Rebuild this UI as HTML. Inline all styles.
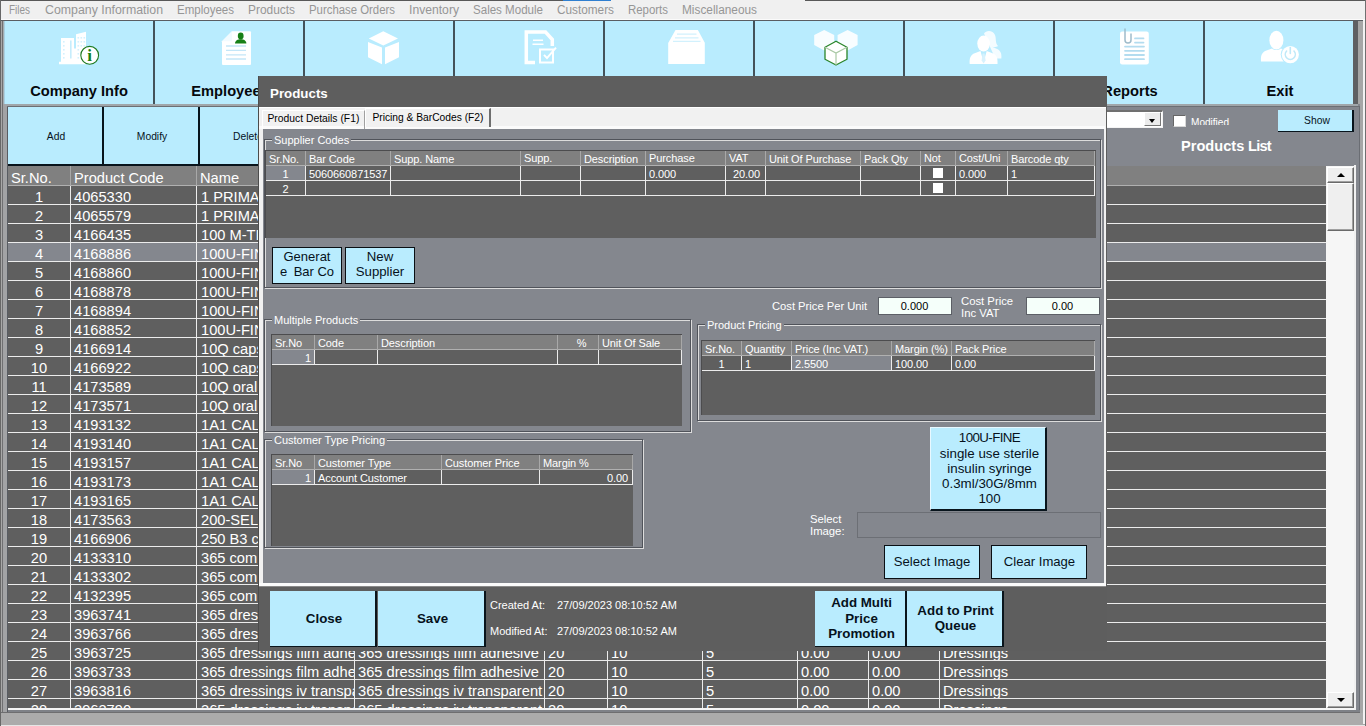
<!DOCTYPE html>
<html><head><meta charset="utf-8"><title>Products</title>
<style>
html,body{margin:0;padding:0;}
body{width:1366px;height:726px;overflow:hidden;background:#a0a0a0;font-family:"Liberation Sans",sans-serif;position:relative;}
.a{position:absolute;box-sizing:border-box;}
.t{position:absolute;white-space:nowrap;line-height:1;}
.menu{font-size:12px;color:#969696;top:4px;transform-origin:0 0;}
.tb{position:absolute;top:21px;height:83px;width:148px;background:#b9ecfe;}
.tbl{position:absolute;left:2px;right:0;top:62px;text-align:center;font-weight:bold;font-size:14.67px;color:#05080c;line-height:16px;white-space:nowrap;}
.sep{position:absolute;top:21px;height:83px;width:2px;background:#44525a;}
.btn{position:absolute;box-sizing:border-box;background:#b9ecfe;color:#06121c;display:flex;align-items:center;justify-content:center;text-align:center;}
.b3{border-right:2px solid #08141c;border-bottom:2px solid #08141c;}
.b1{border:1px solid #0a0f14;}
.b4{border-right:2px solid #0a151c;border-bottom:1.5px solid #0a151c;}
.g{position:absolute;background:#5f5f5f;overflow:hidden;}
.c{position:absolute;box-sizing:border-box;color:#fff;white-space:nowrap;overflow:hidden;border-right:1px solid #ececec;border-bottom:1px solid #ececec;}
.h{background:#808080;border-right:1px solid #a8a8a8;border-bottom:1px solid #b0b0b0;}
.big .c{font-size:14.67px;line-height:18px;height:19px;padding-left:3px;padding-top:1.5px;}
.sm .c{font-size:11px;line-height:16px;height:15px;padding-left:3px;letter-spacing:-0.1px;}
.gb{position:absolute;box-sizing:border-box;border:1px solid #50535a;box-shadow:inset 1px 1px 0 #dcdcdc, 1px 1px 0 #dcdcdc;}
.lg{position:absolute;background:#84878e;color:#fff;font-size:11px;line-height:13px;padding:0 2px;white-space:nowrap;}
.w{color:#fff;}
</style></head><body>

<div class="a" style="left:0;top:0;width:1366px;height:1px;background:#585858"></div>
<div class="a" style="left:563px;top:0;width:48px;height:1px;background:#2f7fd0"></div>
<div class="a" style="left:611px;top:0;width:194px;height:1px;background:#f0f0f0"></div>
<div class="a" style="left:1px;top:1px;width:1364px;height:19px;background:#f0f0f0;border-bottom:1px solid #fbfbfb"></div>
<div class="a" style="left:1px;top:20px;width:1364px;height:1px;background:#5a5d62"></div>
<div class="a" style="left:0;top:0;width:1px;height:726px;background:#686868"></div>
<div class="a" style="left:1px;top:21px;width:1px;height:693px;background:#a8a8a8"></div>
<div class="a" style="left:2px;top:21px;width:1px;height:693px;background:#707072"></div>
<div class="a" style="left:3px;top:21px;width:1px;height:85px;background:#a4acb0"></div>
<div class="a" style="left:4px;top:21px;width:1px;height:85px;background:#a8cfe0"></div>
<div class="a" style="left:3px;top:104px;width:4px;height:610px;background:#a2a3a5"></div>
<div class="a" style="left:7px;top:106px;width:1px;height:606px;background:#585c62"></div>
<div class="a" style="left:1358px;top:21px;width:8px;height:705px;background:#a6a6a6"></div>
<div class="a" style="left:1362.5px;top:20px;width:2.5px;height:704px;background:#f2f2f2"></div>
<div class="a" style="left:1365px;top:0;width:1px;height:726px;background:#707070"></div>
<span class="t menu" style="left:9px;transform:scaleX(0.8287)">Files</span>
<span class="t menu" style="left:45px;transform:scaleX(1.0285)">Company Information</span>
<span class="t menu" style="left:177px;transform:scaleX(0.9600)">Employees</span>
<span class="t menu" style="left:248px;transform:scaleX(0.9924)">Products</span>
<span class="t menu" style="left:309px;transform:scaleX(0.9482)">Purchase Orders</span>
<span class="t menu" style="left:409px;transform:scaleX(1.0130)">Inventory</span>
<span class="t menu" style="left:473px;transform:scaleX(0.9626)">Sales Module</span>
<span class="t menu" style="left:557px;transform:scaleX(0.9824)">Customers</span>
<span class="t menu" style="left:628px;transform:scaleX(0.9517)">Reports</span>
<span class="t menu" style="left:682px;transform:scaleX(0.9862)">Miscellaneous</span>
<div class="a" style="left:8px;top:104px;width:1352px;height:608px;background:#84878e"></div>
<div class="a" style="left:5px;top:104px;width:1353px;height:2px;background:#a0a6aa"></div>
<div class="a" style="left:7px;top:106px;width:1353px;height:1px;background:#6c6f74"></div>
<div class="a" style="left:5px;top:21px;width:1348px;height:83px;background:#b9ecfe"></div>
<div class="a" style="left:1353px;top:21px;width:5px;height:83px;background:#5f6063"></div>
<div class="a" style="left:1359px;top:106px;width:1px;height:607px;background:#6a6d73"></div>
<div class="tb" style="left:5px"><div class="tbl" style="left:0">Company Info</div></div>
<div class="sep" style="left:153px"></div>
<div class="tb" style="left:155px"><div class="tbl">Employees</div></div>
<div class="sep" style="left:303px"></div>
<div class="tb" style="left:305px"><div class="tbl">Products</div></div>
<div class="sep" style="left:453px"></div>
<div class="tb" style="left:455px"><div class="tbl">Purchase Orders</div></div>
<div class="sep" style="left:603px"></div>
<div class="tb" style="left:605px"><div class="tbl">Inventory</div></div>
<div class="sep" style="left:753px"></div>
<div class="tb" style="left:755px"><div class="tbl">Sales</div></div>
<div class="sep" style="left:903px"></div>
<div class="tb" style="left:905px"><div class="tbl">Customers</div></div>
<div class="sep" style="left:1053px"></div>
<div class="tb" style="left:1055px"><div class="tbl">Reports</div></div>
<div class="sep" style="left:1203px"></div>
<div class="tb" style="left:1205px"><div class="tbl">Exit</div></div>
<svg class="a" style="left:0;top:21px" width="1366" height="83" viewBox="0 21 1366 83">
<g fill="#fff">
<!-- company -->
<path d="M61 38h13v10.500h2V34.300l10-2.500V62h-25z M59 61.800h27v2.400h-27z"/>
<g fill="#d4f1fd"><rect x="63" y="41" width="1.6" height="1.6"/><rect x="63" y="45" width="1.6" height="1.6"/><rect x="63" y="49" width="1.6" height="1.6"/><rect x="63" y="53" width="1.6" height="1.6"/><rect x="63" y="57" width="1.6" height="1.6"/>
<rect x="77.5" y="37" width="1.6" height="1.6"/><rect x="80.5" y="37" width="1.6" height="1.6"/><rect x="83.5" y="37" width="1.6" height="1.6"/>
<rect x="77.5" y="41" width="1.6" height="1.6"/><rect x="80.5" y="41" width="1.6" height="1.6"/><rect x="83.5" y="41" width="1.6" height="1.6"/>
<rect x="77.5" y="45" width="1.6" height="1.6"/><rect x="80.5" y="45" width="1.6" height="1.6"/><rect x="83.5" y="45" width="1.6" height="1.6"/>
<rect x="77.5" y="49" width="1.6" height="1.6"/><rect x="77.5" y="53" width="1.6" height="1.6"/><rect x="77.5" y="57" width="1.6" height="1.6"/>
<rect x="70" y="40.5" width="1.6" height="18" fill="#c6edfc"/></g>
<circle cx="89.7" cy="55.3" r="8.9" stroke="#1f7a1f" stroke-width="1.1"/>
<text x="89.6" y="61.4" text-anchor="middle" font-family="Liberation Serif,serif" font-weight="bold" font-size="17" fill="#168016">i</text>
<!-- employees -->
<path d="M232 31.2h18a1 1 0 0 1 1 1V64a1 1 0 0 1-1 1H223a1 1 0 0 1-1-1V41.2z"/>
<path d="M232 31.2v9a1 1 0 0 1-1 1h-9z" fill="#f2fbff"/>
<g stroke="#c3e6f8" stroke-width="1.3"><path d="M226 46h20M226 50.4h20M226 54.8h20M226 59h20"/></g>
<ellipse cx="240.7" cy="36" rx="2.9" ry="3.4" fill="#178017"/>
<path d="M235 43.6c0-3 2.6-4.4 5.700-4.400s5.700 1.400 5.700 4.400z" fill="#178017"/>
<!-- products cube -->
<path d="M383.300 31.200L398 38.400 383.300 45.600 368.800 38.400z M368 42l14 5.400v16.800l-14-7z M399 42l-14 5.400v16.800l14-7z"/>
<!-- purchase orders -->
<g fill="none" stroke="#fff">
<path d="M535 62.400H526.300V32H545.500L552.300 39.500V46" stroke-width="3.500"/>
<path d="M533 40.300h10M532.500 44.300h11" stroke-width="1.400"/>
<rect x="540" y="49.500" width="13" height="13" stroke-width="2"/>
<path d="M544 54.800l3 3.300 9-10.500" stroke-width="2"/>
</g>
<!-- inventory -->
<path d="M668.200 43h36.600v21h-36.600z M675.500 30h22.400l7 13h-36.700z"/>
<g stroke="#d2f1fd" stroke-width="1.300"><path d="M677 34.200h19.500M675 37.800h23.500M673 41.400h27.500"/></g>
<!-- sales cubes -->
<path d="M824.200 30l10 5v10l-10 5.500-10-5.500v-10z M847.600 30l10 5v10l-10 5.500-10-5.500v-10z" fill="#f8fdff"/>
<path d="M836 41.200l11 6v12l-11 5.800-11-5.800v-12z" stroke="#2a852a" stroke-width="1.300" stroke-linejoin="round"/>
<path d="M825 47.200l11 5.800 11-5.800M836 53v12" fill="none" stroke="#a9c8a4" stroke-width="1.200"/>
<!-- customers -->
<path d="M984 33.500c2-3.500 9-3.500 11 1.500 1.500 4 0 8 3 11-1.500 1.200-4 1.200-6 .8 3 1.500 8 2.500 9 6.500 .5 2 .5 4 .3 5.200h-6z" fill="#f4fcff"/>
<ellipse cx="983.600" cy="43.600" rx="6.300" ry="8"/>
<path d="M969.700 64c-.5-6 1-9.500 5-10.800l5.800-2.200 3.100 11.500 3.100-11.500 5.800 2.200c4 1.300 5.500 4.800 5 10.800z"/>
<path d="M982.600 53.500h2l1 7-2 3-2-3z" fill="#d8f2fd"/>
<!-- reports -->
<rect x="1120" y="31.500" width="28.800" height="33" rx="2.200"/>
<g stroke="#b3dcef" stroke-width="1.800" stroke-linecap="round"><path d="M1135 38.400h8.500M1135 42.600h8.500M1125 46.600h19M1125 50.800h19M1125 55h19M1125 59.200h19"/></g>
<path d="M1125 28.500v11.500a3 3 0 0 0 6 0V33.500" fill="none" stroke="#9fbccb" stroke-width="1.500"/>
<!-- exit -->
<ellipse cx="1276.400" cy="40.200" rx="7" ry="9.400"/>
<path d="M1261 61.500c-.5-6 1-9.500 5.500-11l5.500-2c2.500 2 6 2 8.800 0l5.200 2c3 1 4 4 4 11z"/>
<circle cx="1290.300" cy="54.600" r="9.600" fill="#b9ecfe"/>
<circle cx="1290.300" cy="54.600" r="8.600"/>
<path d="M1286.600 51a5 5 0 1 0 7.400 0" fill="none" stroke="#bfe9f8" stroke-width="1.600" stroke-linecap="round"/>
<path d="M1290.300 47.500v6" stroke="#bfe9f8" stroke-width="1.600" stroke-linecap="round"/>
</g></svg>

<div class="btn b3" style="left:8px;top:107px;width:96px;height:59px;font-size:10.3px;padding-top:2px;padding-left:2px">Add</div>
<div class="btn b3" style="left:104px;top:107px;width:96px;height:59px;font-size:10.3px;padding-top:2px;padding-left:2px">Modify</div>
<div class="btn b3" style="left:200px;top:107px;width:96px;height:59px;font-size:10.3px;padding-top:2px;padding-left:2px">Delete</div>
<div class="a" style="left:1040px;top:110px;width:123px;height:18px;background:#fff;border:1px solid #f4f4f4;border-top:2px solid #707070;border-left-color:#777"></div>
<div class="a" style="left:1144px;top:112px;width:17px;height:14px;background:#ececec;border:1px solid #fff;border-right-color:#777;border-bottom-color:#777"></div>
<div class="a" style="left:1148.5px;top:119px;width:0;height:0;border-left:3.5px solid transparent;border-right:3.5px solid transparent;border-top:4px solid #000"></div>
<div class="a" style="left:1173px;top:115px;width:13px;height:12px;background:#fff;border:1px solid #d8d8d8;border-top-color:#666;border-left-color:#666"></div>
<div class="a" style="left:1190px;top:116px;width:50px;height:9px;overflow:hidden"><span class="t w" style="left:1px;top:1.1px;font-size:10.6px;transform:scaleX(.95);transform-origin:0 0">Modified</span></div>
<div class="btn b3" style="left:1278px;top:110px;width:76px;height:21.5px;font-size:10.3px;padding-left:4px;border-bottom-width:1.5px">Show</div>
<span class="t w" style="left:1181px;top:138.8px;font-size:14.6px;font-weight:bold;word-spacing:-0.3px">Products <span style="letter-spacing:-0.8px">List</span></span>
<div class="g big" style="left:8px;top:166px;width:1318px;height:543px;">
<div class="c h" style="left:0px;top:0px;width:63px;height:20px;padding-top:3px;">Sr.No.</div>
<div class="c h" style="left:63px;top:0px;width:126px;height:20px;padding-top:3px;">Product Code</div>
<div class="c h" style="left:189px;top:0px;width:158px;height:20px;padding-top:3px;">Name</div>
<div class="c h" style="left:347px;top:0px;width:190px;height:20px;padding-top:3px;"></div>
<div class="c h" style="left:537px;top:0px;width:63px;height:20px;padding-top:3px;"></div>
<div class="c h" style="left:600px;top:0px;width:95px;height:20px;padding-top:3px;"></div>
<div class="c h" style="left:695px;top:0px;width:95px;height:20px;padding-top:3px;"></div>
<div class="c h" style="left:790px;top:0px;width:71px;height:20px;padding-top:3px;"></div>
<div class="c h" style="left:861px;top:0px;width:71px;height:20px;padding-top:3px;"></div>
<div class="c h" style="left:932px;top:0px;width:400px;height:20px;padding-top:3px;"></div>
<div class="c " style="left:0px;top:20px;width:63px;text-align:center;padding-left:0;">1</div>
<div class="c " style="left:63px;top:20px;width:126px;">4065330</div>
<div class="c " style="left:189px;top:20px;width:158px;padding-left:4px;">1 PRIMA</div>
<div class="c " style="left:347px;top:20px;width:190px;"></div>
<div class="c " style="left:537px;top:20px;width:63px;"></div>
<div class="c " style="left:600px;top:20px;width:95px;"></div>
<div class="c " style="left:695px;top:20px;width:95px;"></div>
<div class="c " style="left:790px;top:20px;width:71px;"></div>
<div class="c " style="left:861px;top:20px;width:71px;"></div>
<div class="c " style="left:932px;top:20px;width:400px;"></div>
<div class="c " style="left:0px;top:39px;width:63px;text-align:center;padding-left:0;">2</div>
<div class="c " style="left:63px;top:39px;width:126px;">4065579</div>
<div class="c " style="left:189px;top:39px;width:158px;padding-left:4px;">1 PRIMA</div>
<div class="c " style="left:347px;top:39px;width:190px;"></div>
<div class="c " style="left:537px;top:39px;width:63px;"></div>
<div class="c " style="left:600px;top:39px;width:95px;"></div>
<div class="c " style="left:695px;top:39px;width:95px;"></div>
<div class="c " style="left:790px;top:39px;width:71px;"></div>
<div class="c " style="left:861px;top:39px;width:71px;"></div>
<div class="c " style="left:932px;top:39px;width:400px;"></div>
<div class="c " style="left:0px;top:58px;width:63px;text-align:center;padding-left:0;">3</div>
<div class="c " style="left:63px;top:58px;width:126px;">4166435</div>
<div class="c " style="left:189px;top:58px;width:158px;padding-left:4px;">100 M-TI</div>
<div class="c " style="left:347px;top:58px;width:190px;"></div>
<div class="c " style="left:537px;top:58px;width:63px;"></div>
<div class="c " style="left:600px;top:58px;width:95px;"></div>
<div class="c " style="left:695px;top:58px;width:95px;"></div>
<div class="c " style="left:790px;top:58px;width:71px;"></div>
<div class="c " style="left:861px;top:58px;width:71px;"></div>
<div class="c " style="left:932px;top:58px;width:400px;"></div>
<div class="c " style="left:0px;top:77px;width:63px;background:#84878e;text-align:center;padding-left:0;">4</div>
<div class="c " style="left:63px;top:77px;width:126px;background:#84878e;">4168886</div>
<div class="c " style="left:189px;top:77px;width:158px;background:#84878e;padding-left:4px;">100U-FIN</div>
<div class="c " style="left:347px;top:77px;width:190px;background:#84878e;"></div>
<div class="c " style="left:537px;top:77px;width:63px;background:#84878e;"></div>
<div class="c " style="left:600px;top:77px;width:95px;background:#84878e;"></div>
<div class="c " style="left:695px;top:77px;width:95px;background:#84878e;"></div>
<div class="c " style="left:790px;top:77px;width:71px;background:#84878e;"></div>
<div class="c " style="left:861px;top:77px;width:71px;background:#84878e;"></div>
<div class="c " style="left:932px;top:77px;width:400px;background:#84878e;"></div>
<div class="c " style="left:0px;top:96px;width:63px;text-align:center;padding-left:0;">5</div>
<div class="c " style="left:63px;top:96px;width:126px;">4168860</div>
<div class="c " style="left:189px;top:96px;width:158px;padding-left:4px;">100U-FIN</div>
<div class="c " style="left:347px;top:96px;width:190px;"></div>
<div class="c " style="left:537px;top:96px;width:63px;"></div>
<div class="c " style="left:600px;top:96px;width:95px;"></div>
<div class="c " style="left:695px;top:96px;width:95px;"></div>
<div class="c " style="left:790px;top:96px;width:71px;"></div>
<div class="c " style="left:861px;top:96px;width:71px;"></div>
<div class="c " style="left:932px;top:96px;width:400px;"></div>
<div class="c " style="left:0px;top:115px;width:63px;text-align:center;padding-left:0;">6</div>
<div class="c " style="left:63px;top:115px;width:126px;">4168878</div>
<div class="c " style="left:189px;top:115px;width:158px;padding-left:4px;">100U-FIN</div>
<div class="c " style="left:347px;top:115px;width:190px;"></div>
<div class="c " style="left:537px;top:115px;width:63px;"></div>
<div class="c " style="left:600px;top:115px;width:95px;"></div>
<div class="c " style="left:695px;top:115px;width:95px;"></div>
<div class="c " style="left:790px;top:115px;width:71px;"></div>
<div class="c " style="left:861px;top:115px;width:71px;"></div>
<div class="c " style="left:932px;top:115px;width:400px;"></div>
<div class="c " style="left:0px;top:134px;width:63px;text-align:center;padding-left:0;">7</div>
<div class="c " style="left:63px;top:134px;width:126px;">4168894</div>
<div class="c " style="left:189px;top:134px;width:158px;padding-left:4px;">100U-FIN</div>
<div class="c " style="left:347px;top:134px;width:190px;"></div>
<div class="c " style="left:537px;top:134px;width:63px;"></div>
<div class="c " style="left:600px;top:134px;width:95px;"></div>
<div class="c " style="left:695px;top:134px;width:95px;"></div>
<div class="c " style="left:790px;top:134px;width:71px;"></div>
<div class="c " style="left:861px;top:134px;width:71px;"></div>
<div class="c " style="left:932px;top:134px;width:400px;"></div>
<div class="c " style="left:0px;top:153px;width:63px;text-align:center;padding-left:0;">8</div>
<div class="c " style="left:63px;top:153px;width:126px;">4168852</div>
<div class="c " style="left:189px;top:153px;width:158px;padding-left:4px;">100U-FIN</div>
<div class="c " style="left:347px;top:153px;width:190px;"></div>
<div class="c " style="left:537px;top:153px;width:63px;"></div>
<div class="c " style="left:600px;top:153px;width:95px;"></div>
<div class="c " style="left:695px;top:153px;width:95px;"></div>
<div class="c " style="left:790px;top:153px;width:71px;"></div>
<div class="c " style="left:861px;top:153px;width:71px;"></div>
<div class="c " style="left:932px;top:153px;width:400px;"></div>
<div class="c " style="left:0px;top:172px;width:63px;text-align:center;padding-left:0;">9</div>
<div class="c " style="left:63px;top:172px;width:126px;">4166914</div>
<div class="c " style="left:189px;top:172px;width:158px;padding-left:4px;">10Q caps</div>
<div class="c " style="left:347px;top:172px;width:190px;"></div>
<div class="c " style="left:537px;top:172px;width:63px;"></div>
<div class="c " style="left:600px;top:172px;width:95px;"></div>
<div class="c " style="left:695px;top:172px;width:95px;"></div>
<div class="c " style="left:790px;top:172px;width:71px;"></div>
<div class="c " style="left:861px;top:172px;width:71px;"></div>
<div class="c " style="left:932px;top:172px;width:400px;"></div>
<div class="c " style="left:0px;top:191px;width:63px;text-align:center;padding-left:0;">10</div>
<div class="c " style="left:63px;top:191px;width:126px;">4166922</div>
<div class="c " style="left:189px;top:191px;width:158px;padding-left:4px;">10Q caps</div>
<div class="c " style="left:347px;top:191px;width:190px;"></div>
<div class="c " style="left:537px;top:191px;width:63px;"></div>
<div class="c " style="left:600px;top:191px;width:95px;"></div>
<div class="c " style="left:695px;top:191px;width:95px;"></div>
<div class="c " style="left:790px;top:191px;width:71px;"></div>
<div class="c " style="left:861px;top:191px;width:71px;"></div>
<div class="c " style="left:932px;top:191px;width:400px;"></div>
<div class="c " style="left:0px;top:210px;width:63px;text-align:center;padding-left:0;">11</div>
<div class="c " style="left:63px;top:210px;width:126px;">4173589</div>
<div class="c " style="left:189px;top:210px;width:158px;padding-left:4px;">10Q oral</div>
<div class="c " style="left:347px;top:210px;width:190px;"></div>
<div class="c " style="left:537px;top:210px;width:63px;"></div>
<div class="c " style="left:600px;top:210px;width:95px;"></div>
<div class="c " style="left:695px;top:210px;width:95px;"></div>
<div class="c " style="left:790px;top:210px;width:71px;"></div>
<div class="c " style="left:861px;top:210px;width:71px;"></div>
<div class="c " style="left:932px;top:210px;width:400px;"></div>
<div class="c " style="left:0px;top:229px;width:63px;text-align:center;padding-left:0;">12</div>
<div class="c " style="left:63px;top:229px;width:126px;">4173571</div>
<div class="c " style="left:189px;top:229px;width:158px;padding-left:4px;">10Q oral</div>
<div class="c " style="left:347px;top:229px;width:190px;"></div>
<div class="c " style="left:537px;top:229px;width:63px;"></div>
<div class="c " style="left:600px;top:229px;width:95px;"></div>
<div class="c " style="left:695px;top:229px;width:95px;"></div>
<div class="c " style="left:790px;top:229px;width:71px;"></div>
<div class="c " style="left:861px;top:229px;width:71px;"></div>
<div class="c " style="left:932px;top:229px;width:400px;"></div>
<div class="c " style="left:0px;top:248px;width:63px;text-align:center;padding-left:0;">13</div>
<div class="c " style="left:63px;top:248px;width:126px;">4193132</div>
<div class="c " style="left:189px;top:248px;width:158px;padding-left:4px;">1A1 CAL</div>
<div class="c " style="left:347px;top:248px;width:190px;"></div>
<div class="c " style="left:537px;top:248px;width:63px;"></div>
<div class="c " style="left:600px;top:248px;width:95px;"></div>
<div class="c " style="left:695px;top:248px;width:95px;"></div>
<div class="c " style="left:790px;top:248px;width:71px;"></div>
<div class="c " style="left:861px;top:248px;width:71px;"></div>
<div class="c " style="left:932px;top:248px;width:400px;"></div>
<div class="c " style="left:0px;top:267px;width:63px;text-align:center;padding-left:0;">14</div>
<div class="c " style="left:63px;top:267px;width:126px;">4193140</div>
<div class="c " style="left:189px;top:267px;width:158px;padding-left:4px;">1A1 CAL</div>
<div class="c " style="left:347px;top:267px;width:190px;"></div>
<div class="c " style="left:537px;top:267px;width:63px;"></div>
<div class="c " style="left:600px;top:267px;width:95px;"></div>
<div class="c " style="left:695px;top:267px;width:95px;"></div>
<div class="c " style="left:790px;top:267px;width:71px;"></div>
<div class="c " style="left:861px;top:267px;width:71px;"></div>
<div class="c " style="left:932px;top:267px;width:400px;"></div>
<div class="c " style="left:0px;top:286px;width:63px;text-align:center;padding-left:0;">15</div>
<div class="c " style="left:63px;top:286px;width:126px;">4193157</div>
<div class="c " style="left:189px;top:286px;width:158px;padding-left:4px;">1A1 CAL</div>
<div class="c " style="left:347px;top:286px;width:190px;"></div>
<div class="c " style="left:537px;top:286px;width:63px;"></div>
<div class="c " style="left:600px;top:286px;width:95px;"></div>
<div class="c " style="left:695px;top:286px;width:95px;"></div>
<div class="c " style="left:790px;top:286px;width:71px;"></div>
<div class="c " style="left:861px;top:286px;width:71px;"></div>
<div class="c " style="left:932px;top:286px;width:400px;"></div>
<div class="c " style="left:0px;top:305px;width:63px;text-align:center;padding-left:0;">16</div>
<div class="c " style="left:63px;top:305px;width:126px;">4193173</div>
<div class="c " style="left:189px;top:305px;width:158px;padding-left:4px;">1A1 CAL</div>
<div class="c " style="left:347px;top:305px;width:190px;"></div>
<div class="c " style="left:537px;top:305px;width:63px;"></div>
<div class="c " style="left:600px;top:305px;width:95px;"></div>
<div class="c " style="left:695px;top:305px;width:95px;"></div>
<div class="c " style="left:790px;top:305px;width:71px;"></div>
<div class="c " style="left:861px;top:305px;width:71px;"></div>
<div class="c " style="left:932px;top:305px;width:400px;"></div>
<div class="c " style="left:0px;top:324px;width:63px;text-align:center;padding-left:0;">17</div>
<div class="c " style="left:63px;top:324px;width:126px;">4193165</div>
<div class="c " style="left:189px;top:324px;width:158px;padding-left:4px;">1A1 CAL</div>
<div class="c " style="left:347px;top:324px;width:190px;"></div>
<div class="c " style="left:537px;top:324px;width:63px;"></div>
<div class="c " style="left:600px;top:324px;width:95px;"></div>
<div class="c " style="left:695px;top:324px;width:95px;"></div>
<div class="c " style="left:790px;top:324px;width:71px;"></div>
<div class="c " style="left:861px;top:324px;width:71px;"></div>
<div class="c " style="left:932px;top:324px;width:400px;"></div>
<div class="c " style="left:0px;top:343px;width:63px;text-align:center;padding-left:0;">18</div>
<div class="c " style="left:63px;top:343px;width:126px;">4173563</div>
<div class="c " style="left:189px;top:343px;width:158px;padding-left:4px;">200-SEL</div>
<div class="c " style="left:347px;top:343px;width:190px;"></div>
<div class="c " style="left:537px;top:343px;width:63px;"></div>
<div class="c " style="left:600px;top:343px;width:95px;"></div>
<div class="c " style="left:695px;top:343px;width:95px;"></div>
<div class="c " style="left:790px;top:343px;width:71px;"></div>
<div class="c " style="left:861px;top:343px;width:71px;"></div>
<div class="c " style="left:932px;top:343px;width:400px;"></div>
<div class="c " style="left:0px;top:362px;width:63px;text-align:center;padding-left:0;">19</div>
<div class="c " style="left:63px;top:362px;width:126px;">4166906</div>
<div class="c " style="left:189px;top:362px;width:158px;padding-left:4px;">250 B3 c</div>
<div class="c " style="left:347px;top:362px;width:190px;"></div>
<div class="c " style="left:537px;top:362px;width:63px;"></div>
<div class="c " style="left:600px;top:362px;width:95px;"></div>
<div class="c " style="left:695px;top:362px;width:95px;"></div>
<div class="c " style="left:790px;top:362px;width:71px;"></div>
<div class="c " style="left:861px;top:362px;width:71px;"></div>
<div class="c " style="left:932px;top:362px;width:400px;"></div>
<div class="c " style="left:0px;top:381px;width:63px;text-align:center;padding-left:0;">20</div>
<div class="c " style="left:63px;top:381px;width:126px;">4133310</div>
<div class="c " style="left:189px;top:381px;width:158px;padding-left:4px;">365 com</div>
<div class="c " style="left:347px;top:381px;width:190px;"></div>
<div class="c " style="left:537px;top:381px;width:63px;"></div>
<div class="c " style="left:600px;top:381px;width:95px;"></div>
<div class="c " style="left:695px;top:381px;width:95px;"></div>
<div class="c " style="left:790px;top:381px;width:71px;"></div>
<div class="c " style="left:861px;top:381px;width:71px;"></div>
<div class="c " style="left:932px;top:381px;width:400px;"></div>
<div class="c " style="left:0px;top:400px;width:63px;text-align:center;padding-left:0;">21</div>
<div class="c " style="left:63px;top:400px;width:126px;">4133302</div>
<div class="c " style="left:189px;top:400px;width:158px;padding-left:4px;">365 com</div>
<div class="c " style="left:347px;top:400px;width:190px;"></div>
<div class="c " style="left:537px;top:400px;width:63px;"></div>
<div class="c " style="left:600px;top:400px;width:95px;"></div>
<div class="c " style="left:695px;top:400px;width:95px;"></div>
<div class="c " style="left:790px;top:400px;width:71px;"></div>
<div class="c " style="left:861px;top:400px;width:71px;"></div>
<div class="c " style="left:932px;top:400px;width:400px;"></div>
<div class="c " style="left:0px;top:419px;width:63px;text-align:center;padding-left:0;">22</div>
<div class="c " style="left:63px;top:419px;width:126px;">4132395</div>
<div class="c " style="left:189px;top:419px;width:158px;padding-left:4px;">365 com</div>
<div class="c " style="left:347px;top:419px;width:190px;"></div>
<div class="c " style="left:537px;top:419px;width:63px;"></div>
<div class="c " style="left:600px;top:419px;width:95px;"></div>
<div class="c " style="left:695px;top:419px;width:95px;"></div>
<div class="c " style="left:790px;top:419px;width:71px;"></div>
<div class="c " style="left:861px;top:419px;width:71px;"></div>
<div class="c " style="left:932px;top:419px;width:400px;"></div>
<div class="c " style="left:0px;top:438px;width:63px;text-align:center;padding-left:0;">23</div>
<div class="c " style="left:63px;top:438px;width:126px;">3963741</div>
<div class="c " style="left:189px;top:438px;width:158px;padding-left:4px;">365 dress</div>
<div class="c " style="left:347px;top:438px;width:190px;"></div>
<div class="c " style="left:537px;top:438px;width:63px;"></div>
<div class="c " style="left:600px;top:438px;width:95px;"></div>
<div class="c " style="left:695px;top:438px;width:95px;"></div>
<div class="c " style="left:790px;top:438px;width:71px;"></div>
<div class="c " style="left:861px;top:438px;width:71px;"></div>
<div class="c " style="left:932px;top:438px;width:400px;"></div>
<div class="c " style="left:0px;top:457px;width:63px;text-align:center;padding-left:0;">24</div>
<div class="c " style="left:63px;top:457px;width:126px;">3963766</div>
<div class="c " style="left:189px;top:457px;width:158px;padding-left:4px;">365 dress</div>
<div class="c " style="left:347px;top:457px;width:190px;"></div>
<div class="c " style="left:537px;top:457px;width:63px;"></div>
<div class="c " style="left:600px;top:457px;width:95px;"></div>
<div class="c " style="left:695px;top:457px;width:95px;"></div>
<div class="c " style="left:790px;top:457px;width:71px;"></div>
<div class="c " style="left:861px;top:457px;width:71px;"></div>
<div class="c " style="left:932px;top:457px;width:400px;"></div>
<div class="c " style="left:0px;top:476px;width:63px;text-align:center;padding-left:0;">25</div>
<div class="c " style="left:63px;top:476px;width:126px;">3963725</div>
<div class="c " style="left:189px;top:476px;width:158px;padding-left:4px;">365 dressings film adhesive</div>
<div class="c " style="left:347px;top:476px;width:190px;">365 dressings film adhesive</div>
<div class="c " style="left:537px;top:476px;width:63px;">20</div>
<div class="c " style="left:600px;top:476px;width:95px;">10</div>
<div class="c " style="left:695px;top:476px;width:95px;">5</div>
<div class="c " style="left:790px;top:476px;width:71px;">0.00</div>
<div class="c " style="left:861px;top:476px;width:71px;">0.00</div>
<div class="c " style="left:932px;top:476px;width:400px;">Dressings</div>
<div class="c " style="left:0px;top:495px;width:63px;text-align:center;padding-left:0;">26</div>
<div class="c " style="left:63px;top:495px;width:126px;">3963733</div>
<div class="c " style="left:189px;top:495px;width:158px;padding-left:4px;">365 dressings film adhesive</div>
<div class="c " style="left:347px;top:495px;width:190px;">365 dressings film adhesive</div>
<div class="c " style="left:537px;top:495px;width:63px;">20</div>
<div class="c " style="left:600px;top:495px;width:95px;">10</div>
<div class="c " style="left:695px;top:495px;width:95px;">5</div>
<div class="c " style="left:790px;top:495px;width:71px;">0.00</div>
<div class="c " style="left:861px;top:495px;width:71px;">0.00</div>
<div class="c " style="left:932px;top:495px;width:400px;">Dressings</div>
<div class="c " style="left:0px;top:514px;width:63px;text-align:center;padding-left:0;">27</div>
<div class="c " style="left:63px;top:514px;width:126px;">3963816</div>
<div class="c " style="left:189px;top:514px;width:158px;padding-left:4px;">365 dressings iv transparent</div>
<div class="c " style="left:347px;top:514px;width:190px;">365 dressings iv transparent</div>
<div class="c " style="left:537px;top:514px;width:63px;">20</div>
<div class="c " style="left:600px;top:514px;width:95px;">10</div>
<div class="c " style="left:695px;top:514px;width:95px;">5</div>
<div class="c " style="left:790px;top:514px;width:71px;">0.00</div>
<div class="c " style="left:861px;top:514px;width:71px;">0.00</div>
<div class="c " style="left:932px;top:514px;width:400px;">Dressings</div>
<div class="c " style="left:0px;top:533px;width:63px;text-align:center;padding-left:0;">28</div>
<div class="c " style="left:63px;top:533px;width:126px;">3963790</div>
<div class="c " style="left:189px;top:533px;width:158px;padding-left:4px;">365 dressings iv transparent</div>
<div class="c " style="left:347px;top:533px;width:190px;">365 dressings iv transparent</div>
<div class="c " style="left:537px;top:533px;width:63px;">20</div>
<div class="c " style="left:600px;top:533px;width:95px;">10</div>
<div class="c " style="left:695px;top:533px;width:95px;">5</div>
<div class="c " style="left:790px;top:533px;width:71px;">0.00</div>
<div class="c " style="left:861px;top:533px;width:71px;">0.00</div>
<div class="c " style="left:932px;top:533px;width:400px;">Dressings</div>
</div>
<div class="a" style="left:8px;top:708px;width:1348px;height:2px;background:#f4f4f4"></div>
<div class="a" style="left:1354px;top:165px;width:2px;height:545px;background:#f0f0f0"></div>
<div class="a" style="left:1326px;top:166px;width:28px;height:542px;background:#f6f6f6"></div>
<div class="a" style="left:1327px;top:167px;width:27px;height:16px;background:#efefef;border:1px solid #fff;border-right-color:#6a6a6a;border-bottom-color:#6a6a6a;box-shadow:inset -1px -1px 0 #a0a0a0"></div>
<div class="a" style="left:1336.5px;top:173px;width:0;height:0;border-left:4px solid transparent;border-right:4px solid transparent;border-bottom:4px solid #000"></div>
<div class="a" style="left:1327px;top:183px;width:27px;height:48px;background:#efefef;border:1px solid #fff;border-right-color:#6a6a6a;border-bottom-color:#6a6a6a;box-shadow:inset -1px -1px 0 #a0a0a0"></div>
<div class="a" style="left:1327px;top:692px;width:27px;height:16px;background:#efefef;border:1px solid #fff;border-right-color:#6a6a6a;border-bottom-color:#6a6a6a;box-shadow:inset -1px -1px 0 #a0a0a0"></div>
<div class="a" style="left:1336.5px;top:698px;width:0;height:0;border-left:4px solid transparent;border-right:4px solid transparent;border-top:4px solid #000"></div>
<div class="a" style="left:8px;top:710px;width:1352px;height:2px;background:#7e8187"></div>
<div class="a" style="left:1px;top:712px;width:1359px;height:1px;background:#6e6e70"></div>
<div class="a" style="left:1px;top:713px;width:1362px;height:11.5px;background:#ababab"></div>
<div class="a" style="left:1px;top:724.5px;width:1364px;height:1.5px;background:#e6e6e6"></div>
<div class="a" style="left:258px;top:76px;width:849px;height:574.5px;background:#5e5e5e;border-left:1px solid #4c4c4c"></div>
<span class="t w" style="left:270px;top:87px;font-size:13.33px;font-weight:bold">Products</span>
<div class="a" style="left:259px;top:107px;width:847px;height:478.5px;background:#f1f1f1;border-top:1px solid #fff"></div>
<div class="a" style="left:259px;top:585.5px;width:847px;height:1px;background:#8a8a8a"></div>
<div class="a" style="left:259px;top:126px;width:846px;height:2.5px;background:#fbfbfb"></div>
<div class="a" style="left:259px;top:583px;width:847px;height:2.5px;background:#fbfbfb"></div>
<div class="a" style="left:263px;top:128.5px;width:841.4px;height:454.3px;background:#84878e"></div>
<div class="a" style="left:262px;top:110px;width:103px;height:19px;border-top:1px solid #fff;border-left:1px solid #fff;border-right:1px solid #a0a0a0"></div>
<span class="t" style="left:267.4px;top:114px;font-size:10.35px;color:#000">Product Details (F1)</span>
<div class="a" style="left:365px;top:108px;width:126px;height:18.5px;background:#f1f1f1;border-top:1px solid #fff;border-left:1px solid #fff;border-right:2px solid #6e6e6e"></div>
<span class="t" style="left:372.4px;top:112.5px;font-size:10.25px;color:#000">Pricing &amp; BarCodes (F2)</span>
<div class="gb" style="left:264px;top:139px;width:837px;height:149px"></div>
<span class="lg" style="left:272px;top:134px">Supplier Codes</span>
<div class="a" style="left:265px;top:150px;width:831px;height:88px;background:#4c4c4e"></div>
<div class="g sm" style="left:266px;top:151px;width:830px;height:87px">
<div class="c h" style="left:0px;top:0;width:40px;">Sr.No.</div>
<div class="c h" style="left:40px;top:0;width:85px;">Bar Code</div>
<div class="c h" style="left:125px;top:0;width:130px;">Supp. Name</div>
<div class="c h" style="left:255px;top:0;width:60px;line-height:14px;">Supp.</div>
<div class="c h" style="left:315px;top:0;width:65px;">Description</div>
<div class="c h" style="left:380px;top:0;width:80px;line-height:14px;">Purchase</div>
<div class="c h" style="left:460px;top:0;width:40px;line-height:14px;">VAT</div>
<div class="c h" style="left:500px;top:0;width:95px;">Unit Of Purchase</div>
<div class="c h" style="left:595px;top:0;width:60px;">Pack Qty</div>
<div class="c h" style="left:655px;top:0;width:35px;line-height:14px;">Not</div>
<div class="c h" style="left:690px;top:0;width:52px;line-height:14px;">Cost/Uni</div>
<div class="c h" style="left:742px;top:0;width:87px;">Barcode qty</div>
<div class="c" style="left:0px;top:15px;width:40px;background:#84878e;text-align:center;padding-left:0;">1</div>
<div class="c" style="left:40px;top:15px;width:85px;">5060660871537</div>
<div class="c" style="left:125px;top:15px;width:130px;"></div>
<div class="c" style="left:255px;top:15px;width:60px;"></div>
<div class="c" style="left:315px;top:15px;width:65px;"></div>
<div class="c" style="left:380px;top:15px;width:80px;">0.000</div>
<div class="c" style="left:460px;top:15px;width:40px;text-align:right;padding-right:5px;">20.00</div>
<div class="c" style="left:500px;top:15px;width:95px;"></div>
<div class="c" style="left:595px;top:15px;width:60px;"></div>
<div class="c" style="left:655px;top:15px;width:35px;text-align:center;padding-left:0;"><span style="display:inline-block;width:10px;height:10px;background:#fff;vertical-align:top;margin-top:2px"></span></div>
<div class="c" style="left:690px;top:15px;width:52px;">0.000</div>
<div class="c" style="left:742px;top:15px;width:87px;">1</div>
<div class="c" style="left:0px;top:30px;width:40px;text-align:center;padding-left:0;">2</div>
<div class="c" style="left:40px;top:30px;width:85px;"></div>
<div class="c" style="left:125px;top:30px;width:130px;"></div>
<div class="c" style="left:255px;top:30px;width:60px;"></div>
<div class="c" style="left:315px;top:30px;width:65px;"></div>
<div class="c" style="left:380px;top:30px;width:80px;"></div>
<div class="c" style="left:460px;top:30px;width:40px;text-align:right;padding-right:5px;"></div>
<div class="c" style="left:500px;top:30px;width:95px;"></div>
<div class="c" style="left:595px;top:30px;width:60px;"></div>
<div class="c" style="left:655px;top:30px;width:35px;text-align:center;padding-left:0;"><span style="display:inline-block;width:10px;height:10px;background:#fff;vertical-align:top;margin-top:2px"></span></div>
<div class="c" style="left:690px;top:30px;width:52px;"></div>
<div class="c" style="left:742px;top:30px;width:87px;"></div>
</div>
<div class="btn b1" style="left:272px;top:247px;width:70px;height:37px;font-size:13px;line-height:15px;padding-bottom:4px"><div>Generat<br>e<span style="margin-left:6.5px">Bar Co</span></div></div>
<div class="btn b1" style="left:345px;top:247px;width:70px;height:37px;font-size:13.2px;line-height:15px;padding-bottom:4px">New<br>Supplier</div>
<span class="t w" style="left:772px;top:301px;font-size:11.2px">Cost Price Per Unit</span>
<div class="a" style="left:877.5px;top:296.7px;width:74px;height:18.6px;background:#f5fffa;font-size:11px;line-height:16.6px;border:1px solid #5c5f66;text-align:center;color:#000">0.000</div>
<span class="t w" style="left:961px;top:295px;font-size:11.3px;line-height:12px">Cost Price<br>Inc VAT</span>
<div class="a" style="left:1025.5px;top:296.7px;width:74px;height:18.6px;background:#f5fffa;font-size:11px;line-height:16.6px;border:1px solid #5c5f66;text-align:center;color:#000">0.00</div>
<div class="gb" style="left:264px;top:319px;width:427px;height:113px"></div>
<span class="lg" style="left:272px;top:314px">Multiple Products</span>
<div class="a" style="left:271px;top:334px;width:411px;height:92px;background:#4c4c4e"></div>
<div class="g sm" style="left:272px;top:335px;width:410px;height:91px">
<div class="c h" style="left:0px;top:0;width:43px;">Sr.No</div>
<div class="c h" style="left:43px;top:0;width:63px;">Code</div>
<div class="c h" style="left:106px;top:0;width:180px;">Description</div>
<div class="c h" style="left:286px;top:0;width:41px;text-align:center;padding-left:7px;">%</div>
<div class="c h" style="left:327px;top:0;width:83px;">Unit Of Sale</div>
<div class="c" style="left:0px;top:15px;width:43px;background:#84878e;text-align:right;padding-right:3px;">1</div>
<div class="c" style="left:43px;top:15px;width:63px;"></div>
<div class="c" style="left:106px;top:15px;width:180px;"></div>
<div class="c" style="left:286px;top:15px;width:41px;"></div>
<div class="c" style="left:327px;top:15px;width:83px;"></div>
</div>
<div class="gb" style="left:697px;top:324px;width:404px;height:97px"></div>
<span class="lg" style="left:705px;top:319px">Product Pricing</span>
<div class="a" style="left:701px;top:340px;width:394px;height:75px;background:#4c4c4e"></div>
<div class="g sm" style="left:702px;top:341px;width:393px;height:74px">
<div class="c h" style="left:0px;top:0;width:40px;">Sr.No.</div>
<div class="c h" style="left:40px;top:0;width:50px;">Quantity</div>
<div class="c h" style="left:90px;top:0;width:100px;">Price (Inc VAT.)</div>
<div class="c h" style="left:190px;top:0;width:60px;">Margin (%)</div>
<div class="c h" style="left:250px;top:0;width:143px;">Pack Price</div>
<div class="c" style="left:0px;top:15px;width:40px;text-align:center;padding-left:0;">1</div>
<div class="c" style="left:40px;top:15px;width:50px;">1</div>
<div class="c" style="left:90px;top:15px;width:100px;background:#84878e;">2.5500</div>
<div class="c" style="left:190px;top:15px;width:60px;">100.00</div>
<div class="c" style="left:250px;top:15px;width:143px;">0.00</div>
</div>
<div class="gb" style="left:264px;top:439px;width:379px;height:109px"></div>
<span class="lg" style="left:272px;top:434px">Customer Type Pricing</span>
<div class="a" style="left:271px;top:454px;width:362px;height:92px;background:#4c4c4e"></div>
<div class="g sm" style="left:272px;top:455px;width:361px;height:91px">
<div class="c h" style="left:0px;top:0;width:43px;">Sr.No</div>
<div class="c h" style="left:43px;top:0;width:127px;">Customer Type</div>
<div class="c h" style="left:170px;top:0;width:98px;">Customer Price</div>
<div class="c h" style="left:268px;top:0;width:93px;">Margin %</div>
<div class="c" style="left:0px;top:15px;width:43px;background:#84878e;text-align:right;padding-right:3px;">1</div>
<div class="c" style="left:43px;top:15px;width:127px;">Account Customer</div>
<div class="c" style="left:170px;top:15px;width:98px;"></div>
<div class="c" style="left:268px;top:15px;width:93px;text-align:right;padding-right:4px;">0.00</div>
</div>
<div class="btn" style="left:930px;top:427px;width:117px;height:84px;font-size:13.33px;line-height:15.3px;border-right:2px solid #08141c;border-bottom:2px solid #08141c;border-top:1px solid #e8f8ff;border-left:1px solid #e8f8ff;padding-left:3px"><div><span style="letter-spacing:-0.6px">100U-FINE</span><br>single use sterile<br>insulin syringe<br>0.3ml/30G/8mm<br>100</div></div>
<span class="t w" style="left:810px;top:513px;font-size:11.3px;line-height:12px">Select<br>Image:</span>
<div class="a" style="left:857px;top:512px;width:244px;height:26px;border:1px solid #6c6f75"></div>
<div class="btn b1" style="left:884px;top:545px;width:96px;height:34px;font-size:13.1px;padding-bottom:2px">Select Image</div>
<div class="btn b1" style="left:991px;top:545px;width:96px;height:34px;font-size:13.1px;padding-bottom:2px;padding-left:1px">Clear Image</div>
<div class="btn b4" style="left:270px;top:591px;width:107px;height:55.5px;font-size:13.33px;font-weight:bold;padding-left:3px">Close</div>
<div class="btn b4" style="left:378px;top:591px;width:108px;height:55.5px;font-size:13.33px;font-weight:bold;padding-left:3px">Save</div>
<span class="t w" style="left:490px;top:600px;font-size:11px">Created At:</span>
<span class="t w" style="left:557px;top:600px;font-size:11px">27/09/2023 08:10:52 AM</span>
<span class="t w" style="left:490px;top:625.5px;font-size:11px">Modified At:</span>
<span class="t w" style="left:557px;top:625.5px;font-size:11px">27/09/2023 08:10:52 AM</span>
<div class="btn b4" style="left:815px;top:591px;width:92px;height:55.5px;font-size:13.33px;font-weight:bold;line-height:15.5px;padding-left:3px">Add Multi<br>Price<br>Promotion</div>
<div class="btn b4" style="left:907px;top:591px;width:97px;height:55.5px;font-size:13.33px;font-weight:bold;line-height:15.5px;padding-left:2px">Add to Print<br>Queue</div>
</body></html>
